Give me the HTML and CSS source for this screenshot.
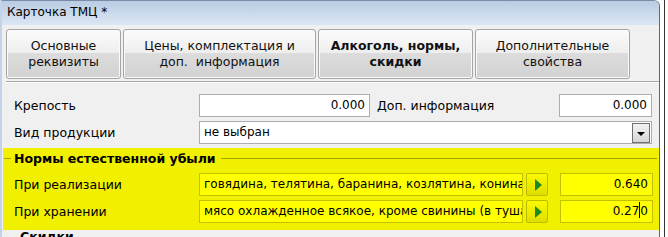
FILE: index.html
```html
<!DOCTYPE html>
<html lang="ru">
<head>
    <meta charset="UTF-8">
    <title>Карточка ТМЦ</title>
    <link rel="stylesheet" href="styles.css">
</head>
<body>
    <div class="window">
        <div class="titlebar">Карточка ТМЦ *</div>

        <div class="tabs">
            <div class="tab tab-main">Основные<br>реквизиты</div>
            <div class="tab tab-prices">Цены, комплектация и<br>доп.&nbsp;&nbsp;информация</div>
            <div class="tab tab-alco active">Алкоголь, нормы,<br>скидки</div>
            <div class="tab tab-extra">Дополнительные<br>свойства</div>
        </div>
        <div class="tabs-line"></div>

        <div class="form">
            <div class="row">
                <span class="label">Крепость</span>
                <div class="field num short">0.000</div>
                <span class="label-inline">Доп. информация</span>
                <div class="field num value">0.000</div>
            </div>
            <div class="row">
                <span class="label">Вид продукции</span>
                <div class="field select">
                    <span>не выбран</span>
                    <span class="drop-btn"></span>
                </div>
            </div>
        </div>

        <div class="losses">
            <div class="legend"><span>Нормы естественной убыли</span></div>
            <div class="row">
                <span class="label">При реализации</span>
                <div class="field yl text">говядина, телятина, баранина, козлятина, конина</div>
                <div class="go-btn"><span class="arrow"></span></div>
                <div class="field yl num value">0.640</div>
            </div>
            <div class="row">
                <span class="label">При хранении</span>
                <div class="field yl text">мясо охлажденное всякое, кроме свинины (в туша</div>
                <div class="go-btn"><span class="arrow"></span></div>
                <div class="field yl num value">0.27<span class="caret"></span>0</div>
            </div>
        </div>

        <div class="section-title">Скидки</div>
    </div>
    <div class="outside"></div>
</body>
</html>
```

FILE: styles.css
```css
body {
    margin: 0;
    background: #fff;
    overflow: hidden;
    font-family: "DejaVu Sans", Verdana, sans-serif;
    font-size: 12.5px;
    color: #000;
}

.window {
    width: 660px;
    height: 260px;
    background: #f0f0f0;
    border-left: 2px solid #c4d4e8;
    border-right: 1px solid #5a6a80;
    border-top: 1px solid #7a8ba3;
    border-top-right-radius: 6px;
    box-sizing: border-box;
}

.titlebar {
    height: 24px;
    line-height: 22px;
    padding-left: 5px;
    background: linear-gradient(180deg, #b9cce3 0%, #dce6f3 100%);
    font-size: 12px;
    border-top-right-radius: 5px;
}

.tabs {
    display: flex;
    gap: 2px;
    padding: 4px 0 0 4px;
}

.tab {
    height: 50px;
    box-sizing: border-box;
    border: 1px solid #a5a5a5;
    border-radius: 3px;
    box-shadow: inset 0 0 0 1px #fafafa;
    background: linear-gradient(180deg, #fbfbfb 0%, #eeeeee 48%, #dcdcdc 49%, #d2d2d2 100%);
    display: flex;
    align-items: center;
    justify-content: center;
    text-align: center;
    line-height: 16px;
    color: #111;
}

.tab-main { width: 115px; }
.tab-prices { width: 193px; }
.tab-alco { width: 155px; }
.tab-extra { width: 155px; }

.tab.active {
    font-weight: bold;
}

.tabs-line {
    margin: 2px 0 0 4px;
    height: 0;
    border-top: 1px solid #a8a8a8;
    border-bottom: 1px solid #fff;
}

.form {
    padding: 11px 0 0 12px;
}

.row {
    display: flex;
    align-items: center;
    height: 23px;
    margin-bottom: 4px;
}

.label {
    width: 185px;
}

.label-inline {
    width: 182px;
    padding-left: 7px;
}

.field {
    height: 23px;
    box-sizing: border-box;
    border: 1px solid #abadb3;
    background: #fff;
    line-height: 21px;
    padding: 0 4px;
    white-space: nowrap;
    overflow: hidden;
    font-size: 12px;
}

.num {
    text-align: right;
}

.short { width: 171px; }
.value { width: 93px; }

.select {
    width: 453px;
    display: flex;
    justify-content: space-between;
    align-items: center;
    padding-right: 1px;
}

.drop-btn {
    width: 18px;
    height: 20px;
    box-sizing: border-box;
    border: 1px solid #707070;
    background: linear-gradient(180deg, #f2f2f2, #d6d6d6);
    position: relative;
}

.drop-btn::after {
    content: "";
    position: absolute;
    left: 4px;
    top: 8px;
    border-left: 4px solid transparent;
    border-right: 4px solid transparent;
    border-top: 4px solid #000;
}

.losses {
    margin: 3px 0 0 1px;
    width: 656px;
    height: 82px;
    background: #f0f000;
    box-sizing: border-box;
    padding: 0 0 0 11px;
}

.legend {
    display: flex;
    align-items: center;
    height: 20px;
    margin-left: -10px;
    margin-right: 2px;
    font-weight: bold;
}

.legend::before {
    content: "";
    width: 7px;
    border-top: 1px solid #a4a400;
    margin-right: 3px;
}

.legend::after {
    content: "";
    flex: 1;
    border-top: 1px solid #a4a400;
    margin-left: 5px;
}

.losses .row {
    margin-top: 5px;
    margin-bottom: 0;
}

.losses .row + .row {
    margin-top: 4px;
}

.losses .label {
    width: 185px;
}

.field.yl {
    background: #ffff00;
    border-color: #c2c200;
}

.text {
    width: 324px;
    padding: 0 4px;
    text-overflow: clip;
}

.go-btn {
    width: 22px;
    height: 23px;
    box-sizing: border-box;
    margin: 0 12px 0 3px;
    border: 1px solid #bcbc00;
    border-radius: 2px;
    background: linear-gradient(180deg, #fafa00, #dede00);
    display: flex;
    align-items: center;
    justify-content: center;
}

.arrow {
    width: 0;
    height: 0;
    border-top: 6px solid transparent;
    border-bottom: 6px solid transparent;
    border-left: 7px solid #1f8a1f;
    margin-left: 2px;
}

.caret {
    display: inline-block;
    width: 1px;
    height: 16px;
    background: #000;
    vertical-align: -3px;
}

.section-title {
    padding: 0 0 0 18px;
    line-height: 13px;
    font-weight: bold;
}

.outside {
    position: absolute;
    left: 664px;
    top: 0;
    width: 1px;
    height: 237px;
    background: #333;
}
```
